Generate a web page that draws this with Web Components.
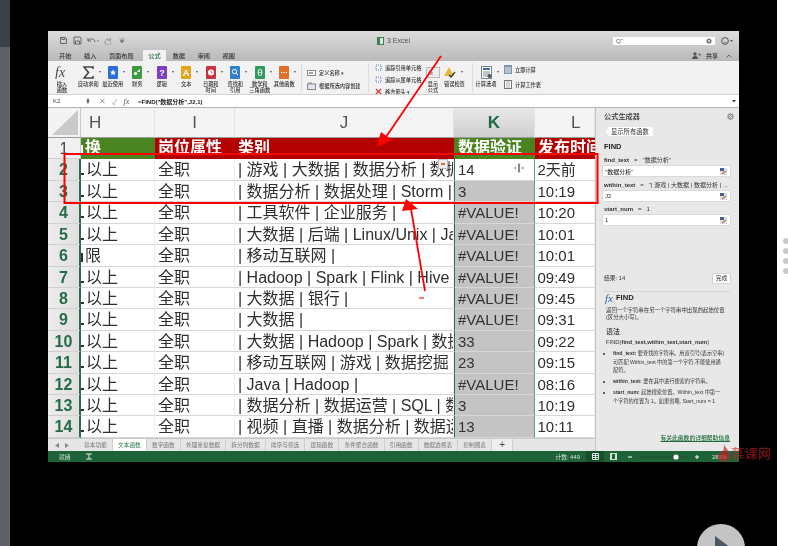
<!doctype html>
<html>
<head>
<meta charset="utf-8">
<title>Excel</title>
<style>
  html, body { margin: 0; height: 100%; background: #000; overflow: hidden; }
  body { font-family: "Liberation Sans", "Noto Sans CJK SC", sans-serif; }
</style>
<script>
  const CJK = '"Liberation Sans", "Noto Sans CJK SC", sans-serif';

  // every element of the page is one of these: own style, own markup, open root
  function define(name, css, render) {
    customElements.define(name, class extends HTMLElement {
      connectedCallback() {
        if (this.shadowRoot) return;
        const root = this.attachShadow({mode: 'open'});
        root.innerHTML = `<style>${css}</style>${render ? render(this) : '<slot></slot>'}`;
      }
    });
  }

  define('x-stage', `
    :host { display: flex; width: 788px; height: 546px; position: relative; overflow: hidden; background: #000; }
    .strip { width: 10px; flex: none; display: flex; flex-direction: column; }
    .strip i { display: block; height: 47px; background: #3b4246; }
    .strip b { display: block; flex: 1; background: #5e6266; }
    .main { flex: 1; padding: 31px 0 0 38px; box-sizing: border-box; }
    .side { width: 11px; flex: none; background: #fff; box-sizing: border-box; padding: 238px 0 0 5.5px; display: flex; flex-direction: column; gap: 4px; }
    .side i { display: block; width: 6px; height: 6px; flex: none; border-radius: 50%; background: #c9c9c9; }
    .play { position: absolute; left: 697px; top: 524px; width: 48px; height: 48px; border-radius: 50%; background: #c4c4c4; }
    .play svg { display: block; }
  `, () => `
    <div class="strip"><i></i><b></b></div>
    <div class="main"><slot></slot></div>
    <div class="side"><i></i><i></i><i></i><i></i></div>
    <slot name="over"></slot>
    <div class="play"><svg width="48" height="48"><path d="M18 12 L34 24 L18 36 Z" fill="#4b5763"/></svg></div>
  `);

  define('x-window', `
    :host { display: flex; flex-direction: column; width: 691px; height: 431px; background: #f2f2f2; filter: blur(.35px); overflow: hidden; }
    .body { flex: 1; min-height: 0; display: flex; }
    .left { width: 547px; flex: none; display: flex; flex-direction: column; min-height: 0; }
  `, () => `
    <slot name="top"></slot>
    <div class="body">
      <div class="left"><slot name="left"></slot></div>
      <slot name="pane"></slot>
    </div>
    <slot name="bottom"></slot>
  `);

  define('x-titlebar', `
    :host { display: block; height: 30px; background: linear-gradient(#dcdcdc, #b9b9b9); font: 6.2px ${CJK}; color: #333; }
    .top { height: 19px; display: grid; grid-template-columns: 1fr auto 1fr; align-items: center; }
    .qat { display: flex; align-items: center; gap: 5px; padding-left: 11px; }
    .name { display: flex; align-items: center; gap: 3px; font-size: 7px; color: #555; }
    .right { display: flex; justify-content: flex-end; align-items: center; padding-right: 6px; gap: 6px; }
    .search { width: 102px; height: 8px; background: #fff; display: flex; justify-content: space-between; align-items: center; padding: 0 3px; box-sizing: border-box; color: #555; }
    .tabs { height: 11px; display: flex; align-items: flex-end; padding-left: 8px; }
    .tabs span { height: 10px; line-height: 10px; padding: 0 3px; margin-right: 6.6px; font-size: 6.2px; font-weight: 500; color: #333; white-space: nowrap; }
    .tabs .on { background: #f2f2f2; color: #1f6b3b; padding: 0 5px; margin: 0 4px 0 0; height: 11px; line-height: 11px; }
    .share { margin-left: auto; display: flex; align-items: center; gap: 5px; padding: 0 7px 1px 0; font-weight: 700; font-size: 6px; color: #444; }
  `, () => `
    <div class="top">
      <div class="qat">
        <svg width="9" height="9" viewBox="0 0 9 9" fill="none" stroke="#666"><path d="M1.5 1.5h5l1 1v5h-6z M3 1.5v2h3v-2"/></svg>
        <svg width="9" height="9" viewBox="0 0 9 9" fill="none" stroke="#666"><path d="M1 1h6l1 1v6H1z M2.5 8V5h4v3"/></svg>
        <svg width="12" height="8" viewBox="0 0 12 8" fill="none" stroke="#666"><path d="M1 1v3h3 M1 4c2-3 6-3 7 1"/><path d="M10 3.5h2l-1 1.5z" fill="#666" stroke="none"/></svg>
        <svg width="8" height="8" viewBox="0 0 8 8" fill="none" stroke="#999"><path d="M6.5 1v2.5h-2.5 M6.5 3.5a3 3 0 1 0 .5 2"/></svg>
        <svg width="6" height="6" viewBox="0 0 6 6" style="margin-left:2px"><path d="M.5 1h5 M1 2.5h4l-2 2.5z" stroke="#777" stroke-width=".7" fill="#777"/></svg>
      </div>
      <div class="name">
        <svg width="7" height="8" viewBox="0 0 7 8"><rect width="7" height="8" fill="#3f7f55"/><rect x="3" y="1" width="3" height="6" fill="#dfe8e2"/></svg>3 Excel
      </div>
      <div class="right">
        <div class="search"><span>Q&#711;</span><svg width="6" height="6"><circle cx="3" cy="3" r="2.6" fill="#777"/><path d="M1.8 1.8l2.4 2.4M4.2 1.8l-2.4 2.4" stroke="#fff" stroke-width=".6"/></svg></div>
        <svg width="12" height="8" viewBox="0 0 12 8" fill="none" stroke="#555"><circle cx="4" cy="4" r="3.4"/><path d="M2.4 5c.8 1 2.4 1 3.2 0" stroke-width=".7"/><path d="M9 3h3l-1.5 2z" fill="#555" stroke="none"/></svg>
      </div>
    </div>
    <div class="tabs">
      <span>开始</span><span>插入</span><span>页面布局</span><span class="on">公式</span><span>数据</span><span>审阅</span><span>视图</span>
      <div class="share"><svg width="9" height="7" viewBox="0 0 9 7" fill="#555"><circle cx="3" cy="2" r="1.7"/><path d="M0 7c0-4 6-4 6 0z"/><path d="M6.5 2.500h2.500M7.750 1.250v2.500" stroke="#555" stroke-width=".7"/></svg>共享<svg width="6" height="4" viewBox="0 0 6 4" fill="none" stroke="#666" style="margin-left:3px"><path d="M.5 3.500l2.500-2.500 2.500 2.500"/></svg></div>
    </div>
  `);

  define('x-ribbon', `
    :host { display: flex; height: 34px; background: #f2f2f2; border-bottom: 1px solid #d2d2d2; box-sizing: border-box; font: 5.2px/6px ${CJK}; font-weight: 500; color: #333; overflow: hidden; }
  `);

  // one icon with a label under it, the caret sits beside the icon
  define('x-rbtn', `
    :host { display: block; width: 24.5px; flex: none; text-align: center; padding-top: 4px; box-sizing: border-box; }
    .row { display: grid; grid-template-columns: 1fr auto 1fr; align-items: center; height: 14px; }
    .caret { justify-self: start; margin-left: 5px; width: 0; height: 0; border: 1.5px solid transparent; border-top: 2px solid #555; border-bottom: 0; }
    .label { margin-top: 2px; white-space: nowrap; }
  `, el => `
    <div class="row"><i></i><slot name="icon"></slot>${el.hasAttribute('caret') ? '<i class="caret"></i>' : '<i></i>'}</div>
    <div class="label"><slot></slot></div>
  `);

  define('x-rgroup', `
    :host { display: flex; flex-direction: column; flex: none; box-sizing: border-box; border-left: 1px solid #dcdcdc; margin: 2px 0; }
  `);

  define('x-rline', `
    :host { display: flex; align-items: center; gap: 3px; white-space: nowrap; }
  `);

  define('x-formula', `
    :host { display: flex; align-items: center; height: 13px; background: #fff; border-bottom: 1px solid #b4b4b4; box-sizing: border-box; font: 6px ${CJK}; color: #222; }
    .name { width: 36px; padding-left: 5px; box-sizing: border-box; color: #444; }
    .spin { width: 8px; color: #555; font-size: 5px; line-height: 3px; text-align: center; }
    .btns { display: flex; align-items: center; width: 46px; gap: 6px; padding-left: 7px; box-sizing: border-box; color: #999; font-size: 8px; }
    .btns em { font: italic 8px "Liberation Serif", serif; color: #555; }
    .f { flex: 1; font-weight: 600; }
    .dd { padding-right: 2px; }
  `, () => `
    <div class="name">K2</div>
    <div class="spin">&#9650;<br>&#9660;</div>
    <div class="btns"><span>&#10005;</span><span>&#10003;</span><em>fx</em></div>
    <div class="f">=FIND("数据分析",J2,1)</div>
    <svg class="dd" width="6" height="4"><path d="M1 1h4L3 3.500z" fill="#444"/></svg>
  `);

  const rows = [
    ['以上', '全职', '| 游戏 | 大数据 | 数据分析 | 数据', '14', '2天前'],
    ['以上', '全职', '| 数据分析 | 数据处理 | Storm |', '3', '10:19'],
    ['以上', '全职', '| 工具软件 | 企业服务 |', '#VALUE!', '10:20'],
    ['以上', '全职', '| 大数据 | 后端 | Linux/Unix | Jav', '#VALUE!', '10:01'],
    ['限', '全职', '| 移动互联网 |', '#VALUE!', '10:01'],
    ['以上', '全职', '| Hadoop | Spark | Flink | Hive |', '#VALUE!', '09:49'],
    ['以上', '全职', '| 大数据 | 银行 |', '#VALUE!', '09:45'],
    ['以上', '全职', '| 大数据 |', '#VALUE!', '09:31'],
    ['以上', '全职', '| 大数据 | Hadoop | Spark | 数据', '33', '09:22'],
    ['以上', '全职', '| 移动互联网 | 游戏 | 数据挖掘 |', '23', '09:15'],
    ['以上', '全职', '| Java | Hadoop |', '#VALUE!', '08:16'],
    ['以上', '全职', '| 数据分析 | 数据运营 | SQL | 数', '3', '10:19'],
    ['以上', '全职', '| 视频 | 直播 | 数据分析 | 数据运', '13', '10:11'],
  ];

  define('x-sheet', `
    :host { display: grid; flex: none; height: 330px; overflow: hidden; background: #fff;
      grid-template-columns: 33px 74px 80px 219px 81px 60px; grid-template-rows: 30px repeat(14, 21.43px);
      font: 16px ${CJK}; color: #2f2f2f; }
    div { box-sizing: border-box; overflow: hidden; white-space: nowrap; min-width: 0; }
    .corner { background: #f3f3f3; border-bottom: 1px solid #9c9c9c; border-right: 1px solid #c8c8c8; }
    .corner svg { display: block; }
    .col { background: #f4f4f4; border-bottom: 1px solid #9c9c9c; border-right: 1px solid #e2e2e2; font-size: 17px; color: #555; line-height: 29px; text-align: center; }
    .col.on { background: linear-gradient(#e8e8e8, #cfcfcf); color: #1d6b42; font-weight: 700; }
    .rh { background: linear-gradient(90deg, #ececec, #e0e0e0); border-bottom: 1px solid #d0d0d0; border-right: 2px solid #2c6b4a; text-align: center; font-size: 16px; line-height: 21px; color: #256b47; font-weight: 600; }
    .rh.first { border-right: 1px solid #c8c8c8; background: #f0f0f0; color: #444; font-weight: 400; }
    .c { border-bottom: 1px solid #d6d6d6; border-right: 1px solid #eeeeee; padding-left: 3px; line-height: 21px; }
    .head { color: #fff; font-weight: 700; border: 0; line-height: 20px; }
    .red { background: #b30000; }
    .green { background: #4a8420; }
    /* the H column is scrolled: only the tail of the char before the text shows */
    .cut { padding-left: 0; }
    .cut::before { content: ""; display: inline-block; width: 3px; height: 2px; margin-right: 2px; background: currentColor; vertical-align: baseline; }
    .cut.short::before { width: 2px; height: 9px; margin-right: 2px; vertical-align: -1px; }
    .k { border-left: 1px solid #2f7050; border-right: 1px solid #5f9c7c; font-size: 15px; background: #c4c4c4; color: #333; }
    .k.active { background: #fff; position: relative; }
    .l { font-size: 15px; padding-left: 2.500px; }
    .j { position: relative; }
    .tag { position: absolute; right: 5px; top: 0; width: 10px; height: 10px; background: #eeeeee; border: 1px solid #b8b8c8; box-sizing: border-box; }
    .tag::after { content: ""; position: absolute; left: 2px; top: 3px; width: 4px; height: 2px; background: #e07020; }
    .move { position: absolute; left: 59px; top: 4px; }
  `, () => {
    let html = `<div class="corner"><svg width="32" height="29"><path d="M4 27 L30 2 V27 Z" fill="#c9c9c9"/></svg></div>`;
    html += `<div class="col" style="text-align:left;padding-left:8px">H</div><div class="col">I</div><div class="col">J</div><div class="col on">K</div><div class="col" style="text-align:left;padding-left:36px">L</div>`;
    html += `<div class="rh first">1</div><div class="c head green cut short">换</div><div class="c head red">岗位属性</div><div class="c head red">类别</div><div class="c head green" style="padding-left:4px">数据验证</div><div class="c head red">发布时间</div>`;
    rows.forEach((r, i) => {
      const short = r[0].length === 1 ? ' short' : '';
      html += `<div class="rh">${i + 2}</div><div class="c cut${short}">${r[0]}</div><div class="c">${r[1]}</div>`;
      html += `<div class="c j">${r[2]}${i === 0 ? '<i class="tag"></i>' : ''}</div>`;
      html += `<div class="c k${i === 0 ? ' active' : ''}">${r[3]}${i === 0 ? '<svg class="move" width="10" height="10" viewBox="0 0 10 10" fill="#888"><path d="M5 0l1.500 2h-3zM5 10l1.500-2h-3zM0 5l2-1.500v3zM10 5l-2-1.500v3z"/><rect x="4" y="2" width="2" height="6"/></svg>' : ''}</div>`;
      html += `<div class="c l">${r[4]}</div>`;
    });
    return html;
  });

  define('x-tabs', `
    :host { display: flex; flex: 1; align-items: stretch; background: #e6e6e6; border-top: 1px solid #c8c8c8; box-sizing: border-box; font: 5.700px ${CJK}; color: #777; white-space: nowrap; overflow: hidden; }
    .nav { width: 31px; flex: none; display: flex; gap: 6px; padding-left: 7px; box-sizing: border-box; align-items: center; }
    .nav svg { display: block; }
    span { display: block; padding: 0 5.100px; line-height: 12px; border-right: 1px solid #cfcfcf; }
    .on { background: #fff; color: #2d7a50; border-bottom: 1px solid #2d7a50; height: 12px; }
    .add { font-size: 10px; color: #444; padding: 0 7px; line-height: 11px; background: #eeeeee; }
  `, () => `
    <div class="nav"><svg width="4" height="5"><path d="M4 0v5L0 2.500z" fill="#888"/></svg><svg width="4" height="5"><path d="M0 0v5l4-2.500z" fill="#888"/></svg></div>
    <span>基本功能</span><span class="on">文本函数</span><span>数字函数</span><span>处理重复数据</span><span>拆分列数据</span><span>排序与筛选</span><span>逻辑函数</span><span>条件聚合函数</span><span>引用函数</span><span>数据透视表</span><span>控制图表</span><span class="add">+</span>
  `);

  define('x-pane', `
    :host { display: flex; flex-direction: column; width: 144px; flex: none; background: #e8e8e8; border-left: 1px solid #c4c4c4; box-sizing: border-box; padding: 0 9px 0 8px; font: 5.400px/7.300px ${CJK}; color: #333; overflow: hidden; }
    .title { display: flex; justify-content: space-between; align-items: center; height: 17px; font-size: 7.200px; font-weight: 500; margin-right: -4px; }
    .back { align-self: flex-start; margin: 2px 0 0 2px; height: 9px; line-height: 9px; padding: 0 4px 0 5px; background: #fff; font-size: 6.300px; clip-path: polygon(3px 0, 100% 0, 100% 100%, 3px 100%, 0 50%); }
    .fn { margin-top: 6px; height: 10px; line-height: 10px; font-size: 7.500px; font-weight: 700; color: #222; }
    .gap { flex: 1; }
    .result { display: flex; justify-content: space-between; align-items: center; height: 9px; font-size: 5.800px; }
    .done { background: #fff; width: 17px; height: 9px; line-height: 9px; text-align: center; box-shadow: 0 0 0 .5px #bbb; }
    hr { border: 0; border-top: 1px solid #d6d6d6; margin: 8px 0 0; }
    .fx { display: flex; align-items: center; gap: 3px; height: 12px; font-size: 7.600px; font-weight: 700; color: #222; padding-left: 1px; }
    .fx em { font: italic 11px "Liberation Serif", serif; color: #2f62a8; }
    .desc { margin: 3px 0 0 2px; }
    .h { margin: 6px 0 0 2px; font-size: 7px; height: 10px; line-height: 10px; font-weight: 500; }
    .sig { margin: 1px 0 0 2px; font-size: 5.800px; height: 8px; line-height: 8px; white-space: nowrap; }
    ul { margin: 3px 0 0; padding: 0 0 0 9px; line-height: 8.200px; font-size: 5.200px; }
    li { margin-bottom: 3px; white-space: nowrap; }
    b { font-weight: 700; }
    .link { margin: 27px 0 9px; text-align: right; font-size: 5.800px; font-weight: 500; color: #1e6b3c; text-decoration: underline; white-space: nowrap; }
  `, () => `
    <div class="title">公式生成器<svg width="7" height="7"><circle cx="3.500" cy="3.500" r="3.200" fill="#9a9a9a"/><path d="M2 2l3 3M5 2l-3 3" stroke="#eee" stroke-width=".8"/></svg></div>
    <div class="back">显示所有函数</div>
    <div class="fn">FIND</div>
    <x-field style="margin-top:4px" name="find_text" value="&quot;数据分析&quot;" input="&quot;数据分析&quot;"></x-field>
    <x-field style="margin-top:5px" name="within_text" value="&quot;| 游戏 | 大数据 | 数据分析 | ..." input="J2"></x-field>
    <x-field style="margin-top:4px" name="start_num" value="1" input="1"></x-field>
    <div class="gap"></div>
    <div class="result"><span>结果: 14</span><span class="done">完成</span></div>
    <hr>
    <div class="fx"><em>fx</em>FIND</div>
    <div class="desc">返回一个字符串在另一个字符串中出现的起始位置<br>(区分大小写)。</div>
    <div class="h">语法</div>
    <div class="sig">FIND(<b>find_text,within_text,start_num</b>)</div>
    <ul>
      <li><b>find_text:</b> 要查找的字符串。用双引号(表示空串)<br>可匹配 Within_text 中的第一个字符,不能使用通<br>配符。</li>
      <li><b>within_text:</b> 要在其中进行搜索的字符串。</li>
      <li><b>start_num:</b> 起始搜索位置。Within_text 中第一<br>个字符的位置为 1。如果省略, Start_num = 1</li>
    </ul>
    <div class="link">有关此函数的详细帮助信息</div>
  `);

  define('x-field', `
    :host { display: block; font: 6px ${CJK}; color: #333; }
    .top { height: 8px; line-height: 8px; white-space: nowrap; overflow: hidden; }
    b { font-weight: 700; margin-right: 5px; }
    .eq { margin-right: 5px; }
    .box { margin: 2px 0 0 -1px; height: 10px; background: #fff; box-shadow: 0 0 0 .5px #ccc; display: flex; justify-content: space-between; align-items: center; padding: 0 3px 0 2px; font-weight: 500; }
    svg { display: block; }
  `, el => `
    <div class="top"><b>${el.getAttribute('name')}</b><span class="eq">=</span>${el.getAttribute('value').replace(/"/g, '&quot;')}</div>
    <div class="box"><span>${el.getAttribute('input').replace(/"/g, '&quot;')}</span><svg width="7" height="7"><rect width="7" height="7" fill="#dcdcdc"/><rect y="0" width="4" height="3" fill="#4a5f9a"/><path d="M2 6l4-3" stroke="#c0392b"/></svg></div>
  `);

  define('x-status', `
    :host { display: flex; align-items: center; height: 11px; background: #1e6338; color: #cfe0d5; font: 5.800px ${CJK}; flex: none; }
    .ready { padding-left: 11px; width: 26px; }
    .gap { flex: 1; }
    .count { margin-right: 6px; }
    .view { width: 18px; height: 11px; display: flex; align-items: center; justify-content: center; }
    .view.on { background: #174f2c; }
    .zoom { display: flex; align-items: center; margin-left: 6px; }
    .pct { margin: 0 7px 0 12px; width: 20px; }
  `, () => `
    <div class="ready">就绪</div>
    <svg width="8" height="7" viewBox="0 0 8 7" fill="none" stroke="#e0ece4"><path d="M1 1h6M1 6h6M4 1v5"/></svg>
    <div class="gap"></div>
    <div class="count">计数: 449</div>
    <div class="view on"><svg width="7" height="7" viewBox="0 0 7 7" fill="none" stroke="#fff" stroke-width=".8"><path d="M.5.5h6v6h-6zM.5 2.500h6M.5 4.500h6M3.500.5v6"/></svg></div>
    <div class="view"><svg width="7" height="7" viewBox="0 0 7 7" fill="#cfe0d5"><path d="M0 0h7v7H0z"/><path d="M2 1h3v5H2z" fill="#1e6338"/></svg></div>
    <div class="zoom"><svg width="72" height="8" viewBox="0 0 72 8"><path d="M0 4h4" stroke="#fff"/><path d="M12 4h47" stroke="#174f2c" stroke-width="1"/><circle cx="48" cy="4" r="2.600" fill="#fff"/><path d="M69 2v4M67 4h4" stroke="#fff"/></svg></div>
    <div class="pct">283%</div>
  `);

  define('x-marks', `
    :host { display: block; position: absolute; left: 0; top: 0; width: 788px; height: 546px; pointer-events: none; }
    svg { display: block; filter: blur(.3px); }
    .wm { position: absolute; left: 731px; top: 445px; font: 500 13px "Noto Sans CJK SC", sans-serif; line-height: 15px; color: rgba(190, 35, 40, .6); white-space: nowrap; letter-spacing: .4px; }
  `, () => `
    <svg width="788" height="546" viewBox="0 0 788 546">
      <rect x="64.500" y="154" width="533" height="49" fill="none" stroke="#f00" stroke-width="2"/>
      <path d="M441 56 L386 137" stroke="#f00" stroke-width="1.800"/>
      <path d="M376.500 147 L381 132 L392 140 Z" fill="#f00"/>
      <path d="M425 291 L411 209" stroke="#f00" stroke-width="1.800"/>
      <path d="M406 199 L402 211 L418 209 Z" fill="#f00"/>
      <path d="M419 298 h5" stroke="#f00"/>
      <path d="M724 444 c1 4 6 7 6 12 a6 5 0 0 1 -12 1 c0 -3 2 -3 3 -6 c1 1 1 2 1 2 c2 -3 2 -6 2 -9z" fill="rgba(190,35,40,.7)"/>
    </svg>
    <div class="wm">慕课网</div>
  `);
</script>
</head>
<body>
<x-stage>
  <x-window>
    <x-titlebar slot="top"></x-titlebar>
    <x-ribbon slot="top" id="ribbon">
      <x-rbtn style="width:28px">
        <svg slot="icon" width="17" height="14" viewBox="0 0 17 14"><text x="1" y="12" font-family="Liberation Serif" font-style="italic" font-size="14" fill="#444">fx</text></svg>
        插入<br>函数
      </x-rbtn>
      <x-rbtn caret>
        <svg slot="icon" width="11" height="13" viewBox="0 0 11 13"><path d="M10 3V1H1l4.500 5.500L1 12h9v-2" fill="none" stroke="#444" stroke-width="1.600"/></svg>
        自动求和
      </x-rbtn>
      <x-rbtn caret>
        <svg slot="icon" width="10" height="13" viewBox="0 0 10 13"><rect width="10" height="13" y="0" rx="1" fill="#2b6fd6"/><path d="M5 3.500l.9 2 2.100.2-1.600 1.400.5 2.100L5 8.100 3.100 9.200l.5-2.100L2 5.700l2.100-.2z" fill="#fff"/></svg>
        最近使用
      </x-rbtn>
      <x-rbtn caret>
        <svg slot="icon" width="10" height="13" viewBox="0 0 10 13"><rect width="10" height="13" rx="1" fill="#3f9a3f"/><circle cx="3.500" cy="7.500" r="1.700" fill="#dff0df"/><path d="M5 6l3-3v3z" fill="#fff"/></svg>
        财务
      </x-rbtn>
      <x-rbtn caret>
        <svg slot="icon" width="10" height="13" viewBox="0 0 10 13"><rect width="10" height="13" rx="1" fill="#7b3fbf"/><text x="5" y="10" text-anchor="middle" font-family="Liberation Sans" font-weight="700" font-size="9" fill="#fff">?</text></svg>
        逻辑
      </x-rbtn>
      <x-rbtn caret>
        <svg slot="icon" width="10" height="13" viewBox="0 0 10 13"><rect width="10" height="13" rx="1" fill="#e3a622"/><text x="5" y="10" text-anchor="middle" font-family="Liberation Sans" font-weight="700" font-size="9" fill="#fff">A</text></svg>
        文本
      </x-rbtn>
      <x-rbtn caret>
        <svg slot="icon" width="10" height="13" viewBox="0 0 10 13"><rect width="10" height="13" rx="1" fill="#c9343f"/><circle cx="5" cy="6.500" r="3" fill="#fff"/><path d="M5 4.500v2h1.500" stroke="#c9343f" stroke-width=".7" fill="none"/></svg>
        日期和<br>时间
      </x-rbtn>
      <x-rbtn caret>
        <svg slot="icon" width="10" height="13" viewBox="0 0 10 13"><rect width="10" height="13" rx="1" fill="#2f80d0"/><circle cx="4.500" cy="5.500" r="2.200" fill="none" stroke="#fff"/><path d="M6 7l2 2" stroke="#fff"/></svg>
        查找和<br>引用
      </x-rbtn>
      <x-rbtn caret>
        <svg slot="icon" width="10" height="13" viewBox="0 0 10 13"><rect width="10" height="13" rx="1" fill="#2e9a5e"/><text x="5" y="10" text-anchor="middle" font-family="DejaVu Sans" font-size="9" fill="#fff">θ</text></svg>
        数学和<br>三角函数
      </x-rbtn>
      <x-rbtn caret>
        <svg slot="icon" width="10" height="13" viewBox="0 0 10 13"><rect width="10" height="13" rx="1" fill="#e0702a"/><path d="M2 6.500h1.300M4.300 6.500h1.300M6.700 6.500h1.300" stroke="#fff"/></svg>
        其他函数
      </x-rbtn>
      <x-rgroup style="width:67px;margin-left:4.500px;padding:7px 0 0 5px;gap:6px">
        <x-rline><svg width="9" height="6"><rect x=".5" y=".5" width="8" height="5" fill="#fff" stroke="#888"/><path d="M2 3h4" stroke="#555"/></svg>定义名称 &#9662;</x-rline>
        <x-rline><svg width="9" height="8"><rect x=".5" y="2" width="8" height="5.500" fill="#dfe6f0" stroke="#888"/><path d="M1 1h4" stroke="#888"/></svg>根据所选内容创建</x-rline>
      </x-rgroup>
      <x-rgroup style="width:54px;padding:1px 0 0 6px;gap:5px">
        <x-rline><svg width="7" height="7"><rect x="1" y="1" width="5" height="5" fill="none" stroke="#5a7fc0" stroke-dasharray="1 1"/></svg>追踪引用单元格</x-rline>
        <x-rline><svg width="7" height="7"><rect x="1" y="1" width="5" height="5" fill="none" stroke="#5a7fc0" stroke-dasharray="1 1"/></svg>追踪从属单元格</x-rline>
        <x-rline><svg width="7" height="7"><path d="M1 1l5 5M6 1L1 6" stroke="#d33" stroke-width="1.200"/></svg>移去箭头 &#9662;</x-rline>
      </x-rgroup>
      <x-rbtn style="width:22px">
        <svg slot="icon" width="14" height="11" viewBox="0 0 14 11"><rect x=".5" y=".5" width="13" height="10" fill="#eee" stroke="#bbb"/><text x="2" y="8" font-family="Liberation Serif" font-style="italic" font-size="7" fill="#555">fx</text></svg>
        显示<br>公式
      </x-rbtn>
      <x-rbtn caret style="width:18px;margin-right:10px">
        <svg slot="icon" width="12" height="11" viewBox="0 0 12 11"><path d="M5 0L10 9H0z" fill="#e8b83a"/><path d="M5 8l2 2 4-5" fill="none" stroke="#333" stroke-width="1.300"/></svg>
        错误检查
      </x-rbtn>
      <x-rgroup style="width:32px">
        <x-rbtn caret style="width:26px;padding-top:2px">
          <svg slot="icon" width="11" height="13" viewBox="0 0 11 13"><rect x=".5" y=".5" width="10" height="12" fill="#fff" stroke="#7a8696"/><rect x="2" y="2" width="7" height="2" fill="#4a6fa5"/><path d="M2 6h7M2 8h7M2 10h7" stroke="#888"/><circle cx="8.500" cy="10" r="2" fill="#555"/></svg>
          计算选项
        </x-rbtn>
      </x-rgroup>
      <div style="display:flex;flex-direction:column;gap:6px;padding-top:4px;white-space:nowrap">
        <x-rline><svg width="8" height="9"><rect width="8" height="9" fill="#7f93ad"/><path d="M1 3h6M1 5h6M1 7h6" stroke="#eee"/></svg>立即计算</x-rline>
        <x-rline><svg width="8" height="9"><rect x=".5" y=".5" width="7" height="8" fill="#fff" stroke="#777"/><path d="M3 1v7M5 1v7" stroke="#aaa"/></svg>计算工作表</x-rline>
      </div>
    </x-ribbon>
    <x-formula slot="top"></x-formula>
    <x-sheet slot="left"></x-sheet>
    <x-tabs slot="left"></x-tabs>
    <x-pane slot="pane"></x-pane>
    <x-status slot="bottom"></x-status>
  </x-window>
  <x-marks slot="over"></x-marks>
</x-stage>
</body>
</html>
